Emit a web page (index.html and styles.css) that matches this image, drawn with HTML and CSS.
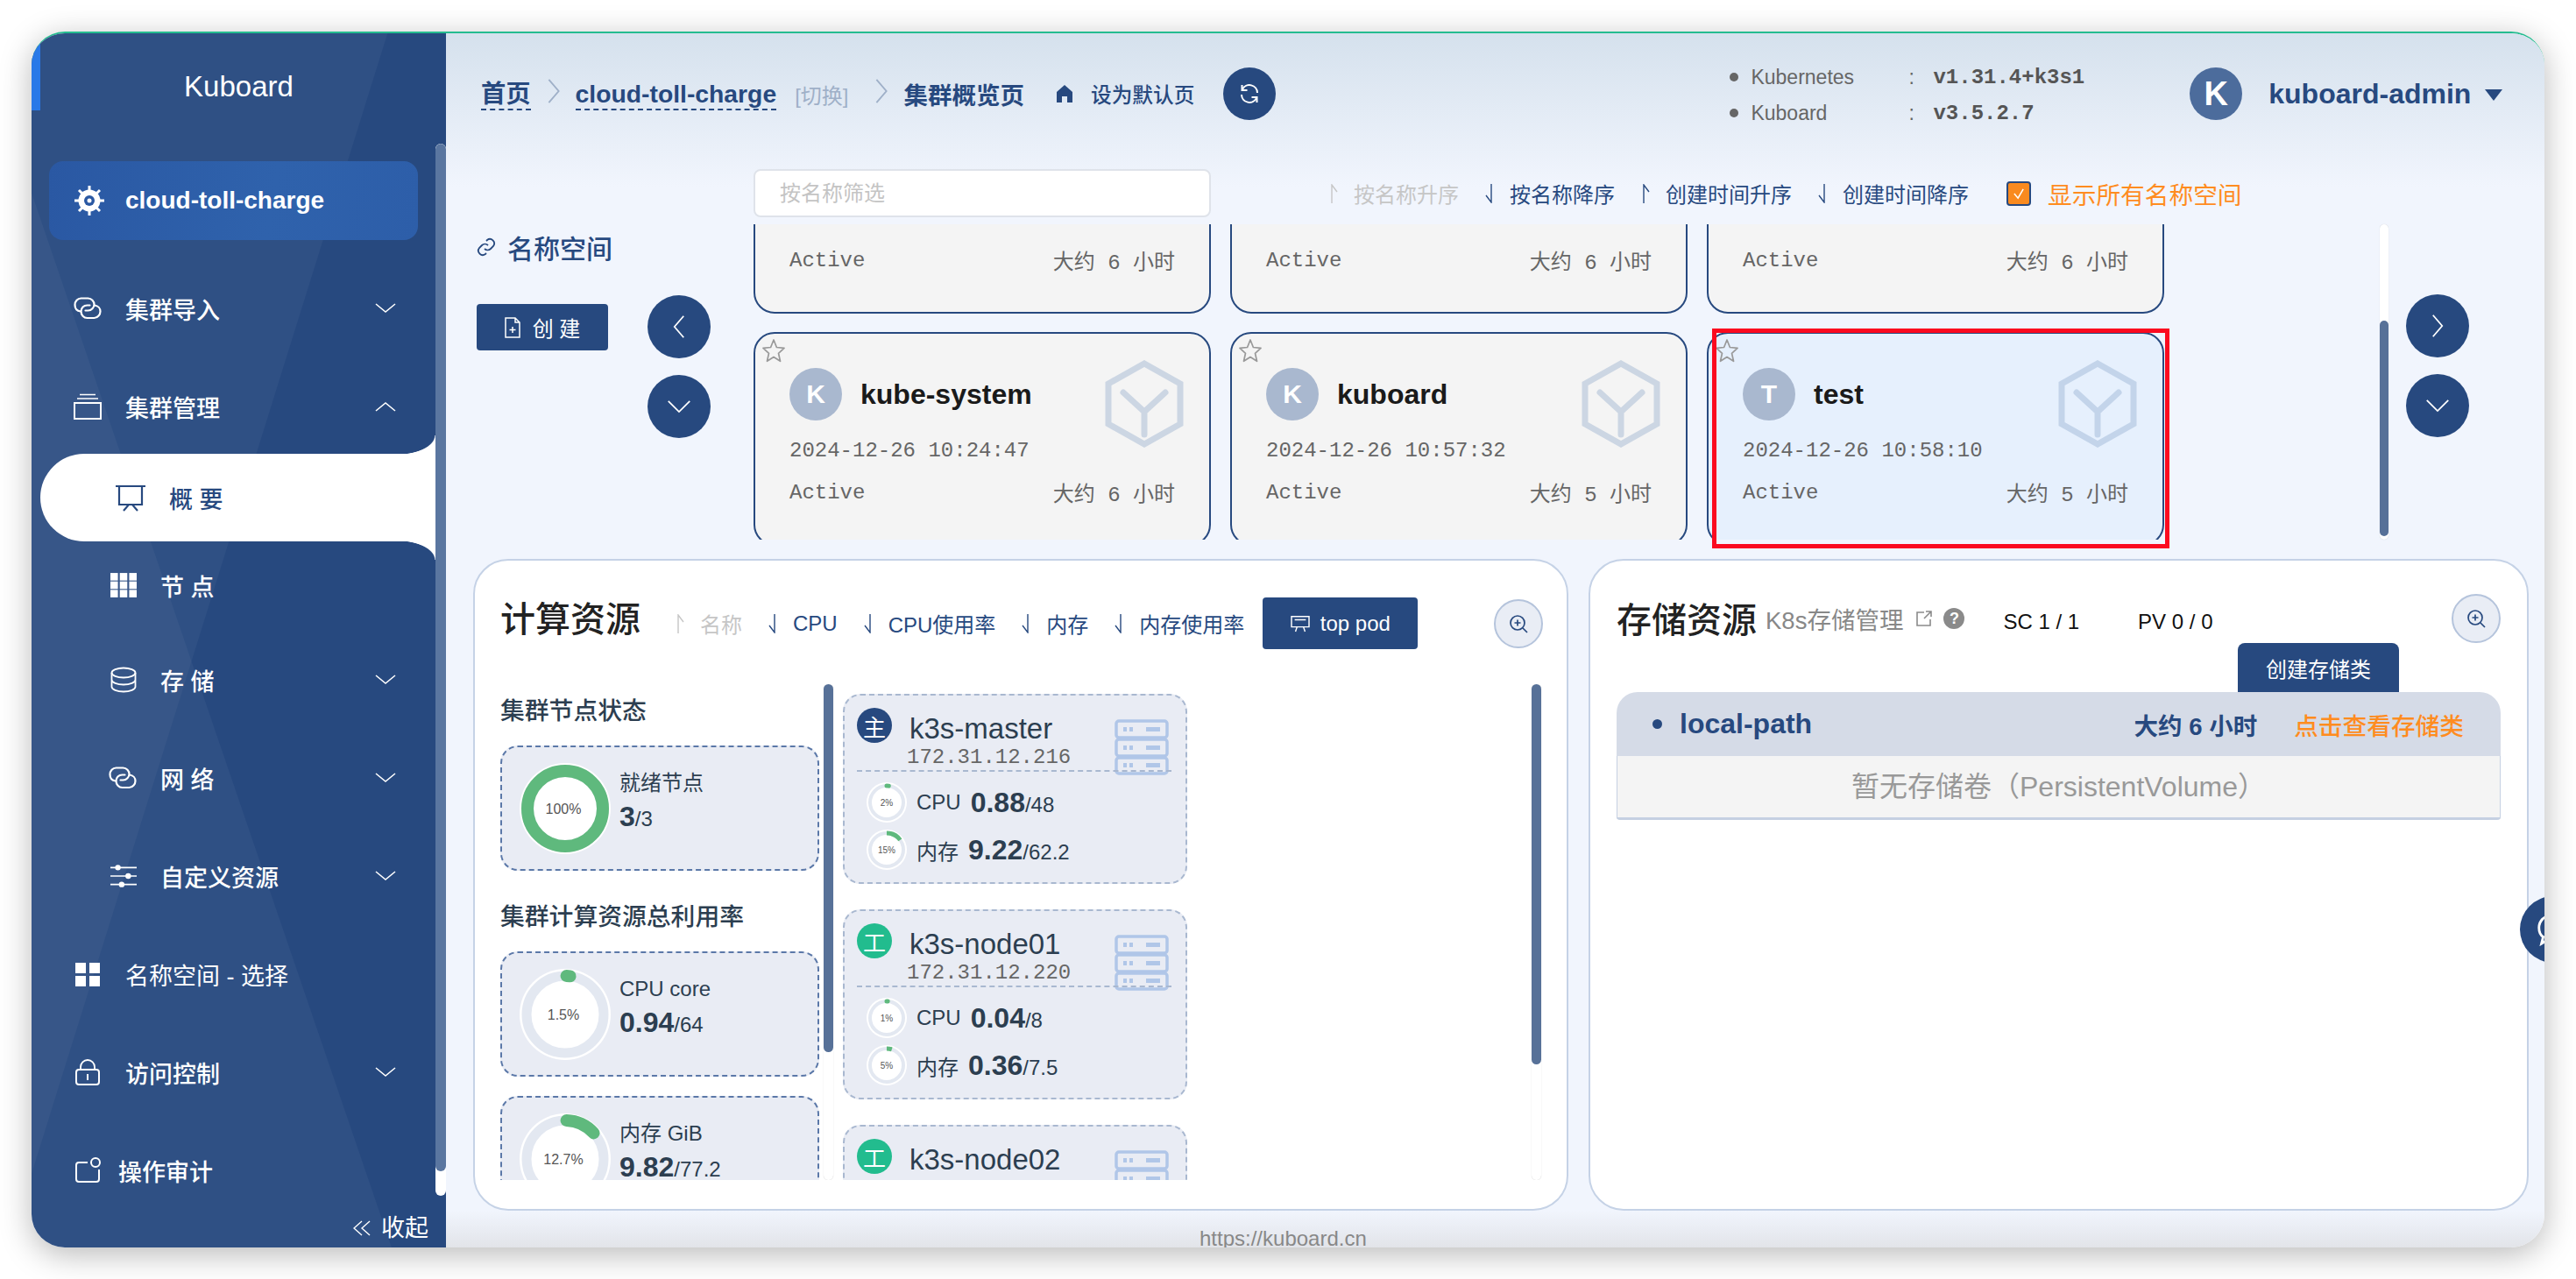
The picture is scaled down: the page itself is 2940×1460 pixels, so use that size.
FILE: index.html
```html
<!DOCTYPE html>
<html lang="zh-CN">
<head>
    <meta charset="UTF-8">
    <title>Kuboard</title>
    <link rel="stylesheet" href="styles.css">
</head>
<body>
<svg class="sprite" xmlns="http://www.w3.org/2000/svg">
    <symbol id="i-chev-down" viewBox="0 0 24 12"><path d="M1 1l11 9L23 1" fill="none" stroke="currentColor" stroke-width="1.6"/></symbol>
    <symbol id="i-chev-up" viewBox="0 0 24 12"><path d="M1 11L12 2l11 9" fill="none" stroke="currentColor" stroke-width="1.6"/></symbol>
    <symbol id="i-link" viewBox="0 0 32 26"><path d="M8 16.500C4 16 1.500 13 1.500 9S4.500 1.500 8.500 1.500h8c4 0 7 3.500 7 7s-3 7-7 7h-3" fill="none" stroke="currentColor" stroke-width="2.200" stroke-linecap="round"/><path d="M24 9.500c4 .5 6.500 3.500 6.500 7s-3 7.500-7 7.500h-8c-4 0-7-3.500-7-7.500s3-7 7-7h3" fill="none" stroke="currentColor" stroke-width="2.200" stroke-linecap="round"/></symbol>
    <symbol id="i-arrow-up" viewBox="0 0 10 22"><path d="M3 22V1l6 8" fill="none" stroke="currentColor" stroke-width="1.4"/></symbol>
    <symbol id="i-arrow-down" viewBox="0 0 10 22"><path d="M7 0v21L1 13" fill="none" stroke="currentColor" stroke-width="1.4"/></symbol>
    <symbol id="i-star" viewBox="0 0 26 28"><path d="M13 2l3.400 8.500 8.600.8-6.500 6 2 9L13 21.500 5.500 26.300l2-9L1 11.300l8.600-.8z" fill="none" stroke="currentColor" stroke-width="1.700" stroke-linejoin="round"/></symbol>
    <symbol id="i-hex" viewBox="0 0 90 100"><path d="M45 4l41 23v46L45 96 4 73V27z" fill="none" stroke="currentColor" stroke-width="7"/><path d="M21 37l24 22 24-22M45 59v26" fill="none" stroke="currentColor" stroke-width="7" stroke-linecap="round"/></symbol>
    <symbol id="i-server" viewBox="0 0 62 64"><g fill="none" stroke="currentColor" stroke-width="3.500"><rect x="2" y="2" width="58" height="19" rx="3"/><rect x="2" y="23" width="58" height="19" rx="3"/><rect x="2" y="44" width="58" height="18" rx="3"/></g><g fill="currentColor"><rect x="10" y="9" width="4" height="5"/><rect x="17" y="9" width="4" height="5"/><rect x="36" y="9" width="16" height="5"/><rect x="10" y="30" width="4" height="5"/><rect x="17" y="30" width="4" height="5"/><rect x="36" y="30" width="16" height="5"/><rect x="10" y="50" width="4" height="5"/><rect x="17" y="50" width="4" height="5"/><rect x="36" y="50" width="16" height="5"/></g></symbol>
    <symbol id="i-zoom" viewBox="0 0 24 24"><circle cx="11" cy="11" r="8" fill="none" stroke="currentColor" stroke-width="1.700"/><path d="M17 17l5 5M11 7.500v7M7.500 11h7" fill="none" stroke="currentColor" stroke-width="1.700"/></symbol>
</svg>

<div class="window">
    <aside class="sidebar">
        <svg class="side-decor" viewBox="0 0 473 1388" xmlns="http://www.w3.org/2000/svg">
            <polygon points="0,0 407,0 0,1304" fill="#fff" fill-opacity="0.04"/>
            <polygon points="0,184 411,1388 0,1388" fill="#fff" fill-opacity="0.04"/>
        </svg>
        <span class="side-notch"></span>
        <nav class="side-nav">
            <div class="side-title">Kuboard</div>
            <div class="cluster-item">
                <svg class="cluster-icon" viewBox="0 0 36 36"><path d="M18 1v34M1 18h34M6 6l24 24M30 6L6 30" stroke="#fff" stroke-width="3"/><circle cx="18" cy="18" r="12.500" fill="#fff"/><circle cx="18" cy="18" r="6" fill="#2a58a3"/><circle cx="18" cy="18" r="2.500" fill="#fff"/></svg>
                <span>cloud-toll-charge</span>
            </div>
            <div class="menu-row first">
                <svg class="menu-icon"><use href="#i-link"/></svg>
                <span>集群导入</span>
                <svg class="chev"><use href="#i-chev-down"/></svg>
            </div>
            <div class="menu-row open">
                <svg class="menu-icon" viewBox="0 0 32 30"><path d="M7 1.500h18M4 6h24" stroke="#fff" stroke-width="1.500"/><rect x="1" y="11" width="30" height="18" fill="none" stroke="#fff" stroke-width="2"/></svg>
                <span>集群管理</span>
                <svg class="chev"><use href="#i-chev-up"/></svg>
            </div>
            <div class="sub-active">
                <svg class="sub-active-icon" viewBox="0 0 34 31"><path d="M0 2h34M4 2v21h26V2M9 30l6-7h4l6 7" fill="none" stroke="#27497f" stroke-width="2.200"/></svg>
                <span>概 要</span>
            </div>
            <div class="menu-row sub short">
                <svg class="menu-icon" viewBox="0 0 28 26"><g fill="#fff"><rect width="8" height="8"/><rect x="10" width="8" height="8"/><rect x="20" width="8" height="8"/><rect y="9" width="8" height="8"/><rect x="10" y="9" width="8" height="8"/><rect x="20" y="9" width="8" height="8"/><rect y="18" width="8" height="8"/><rect x="10" y="18" width="8" height="8"/><rect x="20" y="18" width="8" height="8"/></g></svg>
                <span>节 点</span>
            </div>
            <div class="menu-row sub shifted">
                <svg class="menu-icon" viewBox="0 0 30 30"><g fill="none" stroke="#fff" stroke-width="1.800"><ellipse cx="15" cy="7" rx="13.500" ry="5.500"/><path d="M1.500 7v16c0 3 6 5.500 13.500 5.500s13.500-2.500 13.500-5.500V7M1.500 15c0 3 6 5.500 13.500 5.500s13.500-2.500 13.500-5.500"/></g></svg>
                <span>存 储</span>
                <svg class="chev"><use href="#i-chev-down"/></svg>
            </div>
            <div class="menu-row sub net">
                <svg class="menu-icon"><use href="#i-link"/></svg>
                <span>网 络</span>
                <svg class="chev"><use href="#i-chev-down"/></svg>
            </div>
            <div class="menu-row sub wide-label">
                <svg class="menu-icon" viewBox="0 0 28 26"><path d="M0 4h28M0 13h28M0 22h28" stroke="#fff" stroke-width="1.600"/><circle cx="8" cy="4" r="3" fill="#fff"/><circle cx="19" cy="13" r="3" fill="#fff"/><circle cx="12" cy="22" r="3" fill="#fff"/></svg>
                <span>自定义资源</span>
                <svg class="chev"><use href="#i-chev-down"/></svg>
            </div>
            <div class="menu-row thin">
                <svg class="menu-icon" viewBox="0 0 32 28"><g fill="#fff"><rect x="2" y="1" width="12" height="12"/><rect x="18" y="1" width="12" height="12"/><rect x="2" y="16" width="12" height="12"/><rect x="18" y="16" width="12" height="12"/></g></svg>
                <span>名称空间 - 选择</span>
            </div>
            <div class="menu-row">
                <svg class="menu-icon" viewBox="0 0 32 30"><path d="M8 11V9a8 8 0 0 1 16 0v2" fill="none" stroke="#fff" stroke-width="1.800"/><rect x="3" y="12" width="26" height="17" rx="3" fill="none" stroke="#fff" stroke-width="2"/><path d="M16 17v7" stroke="#fff" stroke-width="2"/></svg>
                <span>访问控制</span>
                <svg class="chev"><use href="#i-chev-down"/></svg>
            </div>
            <div class="menu-row audit">
                <svg class="menu-icon" viewBox="0 0 32 30"><path d="M16 6H6a3 3 0 0 0-3 3v16a3 3 0 0 0 3 3h20a3 3 0 0 0 3-3V14" fill="none" stroke="#fff" stroke-width="2"/><circle cx="25" cy="6" r="5" fill="none" stroke="#fff" stroke-width="2"/></svg>
                <span>操作审计</span>
            </div>
        </nav>
        <div class="side-scroll"><span class="side-scroll-thumb"></span></div>
        <div class="collapse">
            <svg viewBox="0 0 20 18"><path d="M10 1L1 9l9 8M19 1l-9 8 9 8" fill="none" stroke="#fff" stroke-width="1.400"/></svg>
            <span>收起</span>
        </div>
    </aside>

    <main class="main">
        <header class="topbar">
            <a class="crumb-link">首页</a>
            <svg class="crumb-sep" viewBox="0 0 16 32"><path d="M2 2l12 14L2 30" fill="none" stroke="#9fb0c8" stroke-width="2"/></svg>
            <a class="crumb-link">cloud-toll-charge</a>
            <span class="crumb-switch">[切换]</span>
            <svg class="crumb-sep" viewBox="0 0 16 32"><path d="M2 2l12 14L2 30" fill="none" stroke="#9fb0c8" stroke-width="2"/></svg>
            <span class="crumb-current">集群概览页</span>
            <svg class="home-icon" viewBox="0 0 20 22"><path d="M10 1L1 9v12h6v-7h6v7h6V9z" fill="#27497f"/></svg>
            <span class="set-default">设为默认页</span>
            <span class="refresh">
                <svg viewBox="0 0 24 24"><path d="M21 11A9 9 0 0 0 4 7M3 13a9 9 0 0 0 17 4" fill="none" stroke="#fff" stroke-width="2"/><path d="M3.500 2v6h6M20.500 22v-6h-6" fill="none" stroke="#fff" stroke-width="2"/></svg>
            </span>
            <div class="versions">
                <div class="version-row"><i></i><span class="v-name">Kubernetes</span><span class="v-colon">:</span><span class="v-value">v1.31.4+k3s1</span></div>
                <div class="version-row"><i></i><span class="v-name">Kuboard</span><span class="v-colon">:</span><span class="v-value">v3.5.2.7</span></div>
            </div>
            <span class="user-avatar">K</span>
            <span class="user-name">kuboard-admin</span>
            <span class="user-caret"></span>
        </header>

        <section class="ns">
            <div class="ns-left">
                <div class="ns-label">
                    <svg viewBox="0 0 24 24"><path d="M10 14a5 5 0 0 0 7 0l3-3a5 5 0 0 0-7-7l-1 1M14 10a5 5 0 0 0-7 0l-3 3a5 5 0 0 0 7 7l1-1" fill="none" stroke="#27497f" stroke-width="1.800"/></svg>
                    <span>名称空间</span>
                </div>
                <button class="create-btn">
                    <svg viewBox="0 0 18 24"><path d="M1 1h11l5 5v17H1zM12 1v5h5M9 11v7M5.500 14.500h7" fill="none" stroke="#fff" stroke-width="1.500"/></svg>
                    <span>创 建</span>
                </button>
            </div>
            <div class="ns-arrows">
                <span class="round-btn"><svg viewBox="0 0 20 32"><path d="M16 2L4 16l12 14" fill="none" stroke="#fff" stroke-width="2"/></svg></span>
                <span class="round-btn"><svg viewBox="0 0 32 20"><path d="M2 3l14 14L30 3" fill="none" stroke="#fff" stroke-width="2"/></svg></span>
            </div>
            <div class="ns-center">
                <div class="ns-tools">
                    <input class="ns-filter" type="text" placeholder="按名称筛选">
                    <span class="sort off first-sort"><svg><use href="#i-arrow-up"/></svg>按名称升序</span>
                    <span class="sort"><svg><use href="#i-arrow-down"/></svg>按名称降序</span>
                    <span class="sort"><svg><use href="#i-arrow-up"/></svg>创建时间升序</span>
                    <span class="sort"><svg><use href="#i-arrow-down"/></svg>创建时间降序</span>
                    <span class="ns-check"><svg viewBox="0 0 28 28"><path d="M8 14l5 6 7-12" fill="none" stroke="#fff" stroke-width="1.800"/></svg></span>
                    <span class="ns-check-label">显示所有名称空间</span>
                </div>
                <div class="ns-view">
                    <div class="ns-grid">
                        <div class="ns-card">
                            <div class="ns-head"></div>
                            <div class="ns-date">2024-12-26 10:24:47</div>
                            <div class="ns-meta"><span>Active</span><span>大约 6 小时</span></div>
                        </div>
                        <div class="ns-card">
                            <div class="ns-head"></div>
                            <div class="ns-date">2024-12-26 10:24:47</div>
                            <div class="ns-meta"><span>Active</span><span>大约 6 小时</span></div>
                        </div>
                        <div class="ns-card">
                            <div class="ns-head"></div>
                            <div class="ns-date">2024-12-26 10:24:47</div>
                            <div class="ns-meta"><span>Active</span><span>大约 6 小时</span></div>
                        </div>
                        <div class="ns-card">
                            <svg class="star"><use href="#i-star"/></svg>
                            <div class="ns-head"><span class="ns-avatar">K</span><span class="ns-name">kube-system</span></div>
                            <svg class="hex"><use href="#i-hex"/></svg>
                            <div class="ns-date">2024-12-26 10:24:47</div>
                            <div class="ns-meta"><span>Active</span><span>大约 6 小时</span></div>
                        </div>
                        <div class="ns-card">
                            <svg class="star"><use href="#i-star"/></svg>
                            <div class="ns-head"><span class="ns-avatar">K</span><span class="ns-name">kuboard</span></div>
                            <svg class="hex"><use href="#i-hex"/></svg>
                            <div class="ns-date">2024-12-26 10:57:32</div>
                            <div class="ns-meta"><span>Active</span><span>大约 5 小时</span></div>
                        </div>
                        <div class="ns-card selected">
                            <svg class="star"><use href="#i-star"/></svg>
                            <div class="ns-head"><span class="ns-avatar">T</span><span class="ns-name">test</span></div>
                            <svg class="hex"><use href="#i-hex"/></svg>
                            <div class="ns-date">2024-12-26 10:58:10</div>
                            <div class="ns-meta"><span>Active</span><span>大约 5 小时</span></div>
                        </div>
                    </div>
                </div>
                <div class="red-mark"></div>
            </div>
            <div class="ns-scroll"><span></span></div>
            <div class="ns-arrows right">
                <span class="round-btn"><svg viewBox="0 0 20 32"><path d="M4 2l12 14L4 30" fill="none" stroke="#fff" stroke-width="2"/></svg></span>
                <span class="round-btn"><svg viewBox="0 0 32 20"><path d="M2 3l14 14L30 3" fill="none" stroke="#fff" stroke-width="2"/></svg></span>
            </div>
        </section>

        <section class="panels">
            <div class="panel compute">
                <div class="panel-head">
                    <h2 class="panel-title">计算资源</h2>
                    <span class="sort off s-name"><svg><use href="#i-arrow-up"/></svg>名称</span>
                    <span class="sort"><svg><use href="#i-arrow-down"/></svg>CPU</span>
                    <span class="sort"><svg><use href="#i-arrow-down"/></svg>CPU使用率</span>
                    <span class="sort"><svg><use href="#i-arrow-down"/></svg>内存</span>
                    <span class="sort"><svg><use href="#i-arrow-down"/></svg>内存使用率</span>
                    <button class="top-pod">
                        <svg viewBox="0 0 24 22"><path d="M1 2h22v13H1zM5 6h14M8 15l-2 6M16 15l2 6" fill="none" stroke="#fff" stroke-width="1.600"/></svg>
                        <span>top pod</span>
                    </button>
                    <span class="zoom-btn"><svg><use href="#i-zoom"/></svg></span>
                </div>
                <div class="compute-body">
                    <div class="stats-col">
                        <div class="stats-title">集群节点状态</div>
                        <div class="stat-card">
                            <svg class="ring" viewBox="0 0 104 104">
                                <circle class="ring-bg" cx="52" cy="52" r="52"/>
                                <circle class="ring-track" cx="52" cy="52" r="43" stroke-width="14"/>
                                <circle class="ring-value" cx="52" cy="52" r="43" stroke-width="14" pathLength="100" stroke-dasharray="100 100" transform="rotate(-90 52 52)"/>
                                <text x="50" y="58" text-anchor="middle" class="ring-text">100%</text>
                            </svg>
                            <div class="stat-text">
                                <div class="stat-label">就绪节点</div>
                                <div class="stat-value"><b>3</b>/3</div>
                            </div>
                        </div>
                        <div class="stats-title second">集群计算资源总利用率</div>
                        <div class="stat-card">
                            <svg class="ring" viewBox="0 0 104 104">
                                <circle class="ring-bg" cx="52" cy="52" r="52"/>
                                <circle class="ring-track" cx="52" cy="52" r="44" stroke-width="11"/>
                                <circle class="ring-value" cx="52" cy="52" r="44" stroke-width="14" stroke-linecap="round" pathLength="100" stroke-dasharray="1.500 100" transform="rotate(-88 52 52)"/>
                                <text x="50" y="58" text-anchor="middle" class="ring-text">1.5%</text>
                            </svg>
                            <div class="stat-text">
                                <div class="stat-label">CPU core</div>
                                <div class="stat-value"><b>0.94</b>/64</div>
                            </div>
                        </div>
                        <div class="stat-card third">
                            <svg class="ring" viewBox="0 0 104 104">
                                <circle class="ring-bg" cx="52" cy="52" r="52"/>
                                <circle class="ring-track" cx="52" cy="52" r="44" stroke-width="11"/>
                                <circle class="ring-value" cx="52" cy="52" r="44" stroke-width="14" stroke-linecap="round" pathLength="100" stroke-dasharray="12.700 100" transform="rotate(-88 52 52)"/>
                                <text x="50" y="58" text-anchor="middle" class="ring-text">12.7%</text>
                            </svg>
                            <div class="stat-text">
                                <div class="stat-label">内存 GiB</div>
                                <div class="stat-value"><b>9.82</b>/77.2</div>
                            </div>
                        </div>
                    </div>
                    <div class="v-scroll left"><span></span></div>
                    <div class="nodes-col">
                        <div class="node-card">
                            <svg class="node-server"><use href="#i-server"/></svg>
                            <div class="node-head">
                                <span class="node-badge master">主</span>
                                <div class="node-titles"><div class="node-name">k3s-master</div><div class="node-ip">172.31.12.216</div></div>
                            </div>
                            <div class="node-stat">
                                <svg class="mini-ring" viewBox="0 0 46 46"><circle class="ring-bg" cx="23" cy="23" r="23"/><circle class="ring-track" cx="23" cy="23" r="19" stroke-width="4"/><circle class="ring-value" cx="23" cy="23" r="19" stroke-width="5" stroke-linecap="round" pathLength="100" stroke-dasharray="2 100" transform="rotate(-90 23 23)"/><text x="23" y="27" text-anchor="middle" class="mini-text">2%</text></svg>
                                <span class="ns-stat-name">CPU</span><span class="node-val"><b>0.88</b>/48</span>
                            </div>
                            <div class="node-stat">
                                <svg class="mini-ring" viewBox="0 0 46 46"><circle class="ring-bg" cx="23" cy="23" r="23"/><circle class="ring-track" cx="23" cy="23" r="19" stroke-width="4"/><circle class="ring-value" cx="23" cy="23" r="19" stroke-width="5" pathLength="100" stroke-dasharray="15 100" transform="rotate(-90 23 23)"/><text x="23" y="27" text-anchor="middle" class="mini-text">15%</text></svg>
                                <span class="ns-stat-name">内存</span><span class="node-val"><b>9.22</b>/62.2</span>
                            </div>
                        </div>
                        <div class="node-card">
                            <svg class="node-server"><use href="#i-server"/></svg>
                            <div class="node-head">
                                <span class="node-badge worker">工</span>
                                <div class="node-titles"><div class="node-name">k3s-node01</div><div class="node-ip">172.31.12.220</div></div>
                            </div>
                            <div class="node-stat">
                                <svg class="mini-ring" viewBox="0 0 46 46"><circle class="ring-bg" cx="23" cy="23" r="23"/><circle class="ring-track" cx="23" cy="23" r="19" stroke-width="4"/><circle class="ring-value" cx="23" cy="23" r="19" stroke-width="5" stroke-linecap="round" pathLength="100" stroke-dasharray="1 100" transform="rotate(-90 23 23)"/><text x="23" y="27" text-anchor="middle" class="mini-text">1%</text></svg>
                                <span class="ns-stat-name">CPU</span><span class="node-val"><b>0.04</b>/8</span>
                            </div>
                            <div class="node-stat">
                                <svg class="mini-ring" viewBox="0 0 46 46"><circle class="ring-bg" cx="23" cy="23" r="23"/><circle class="ring-track" cx="23" cy="23" r="19" stroke-width="4"/><circle class="ring-value" cx="23" cy="23" r="19" stroke-width="5" pathLength="100" stroke-dasharray="5 100" transform="rotate(-90 23 23)"/><text x="23" y="27" text-anchor="middle" class="mini-text">5%</text></svg>
                                <span class="ns-stat-name">内存</span><span class="node-val"><b>0.36</b>/7.5</span>
                            </div>
                        </div>
                        <div class="node-card">
                            <svg class="node-server"><use href="#i-server"/></svg>
                            <div class="node-head">
                                <span class="node-badge worker">工</span>
                                <div class="node-titles"><div class="node-name">k3s-node02</div></div>
                            </div>
                        </div>
                    </div>
                    <div class="v-scroll right"><span></span></div>
                </div>
            </div>

            <div class="panel storage">
                <div class="storage-head">
                    <h2 class="panel-title">存储资源</h2>
                    <span class="k8s-link">K8s存储管理</span>
                    <svg class="ext-icon" viewBox="0 0 20 20"><path d="M10 3H2v15h15v-7M12 2h6v6M18 2l-8 8" fill="none" stroke="#8a8a8a" stroke-width="1.600"/></svg>
                    <span class="help">?</span>
                    <span class="sc-count">SC 1 / 1</span>
                    <span class="pv-count">PV 0 / 0</span>
                    <span class="zoom-btn"><svg><use href="#i-zoom"/></svg></span>
                </div>
                <div class="storage-action"><button class="create-sc">创建存储类</button></div>
                <div class="sc-card">
                    <div class="sc-head">
                        <i></i>
                        <span class="sc-name">local-path</span>
                        <span class="sc-age">大约 6 小时</span>
                        <span class="sc-link">点击查看存储类</span>
                    </div>
                    <div class="sc-body">暂无存储卷（PersistentVolume）</div>
                </div>
            </div>
        </section>

        <footer class="page-foot">https://kuboard.cn</footer>
        <div class="chat-bubble"><svg viewBox="0 0 40 40"><path d="M21 3C11 3 5 10 5 18c0 5 2 9 5 11l-2 8 8-5c1 .3 3 .5 5 .5 10 0 16-7 16-14.500S31 3 21 3z" fill="none" stroke="#fff" stroke-width="3"/></svg></div>
    </main>
</div>
</body>
</html>
```

FILE: styles.css
```css
* {
    box-sizing: border-box;
}
html, body {
    margin: 0;
    height: 1460px;
    overflow: hidden;
    background-color: #fff;
}
body {
    padding: 36px 36px 0;
    font-family: "Liberation Sans", "Noto Sans CJK SC", sans-serif;
    color: #2c3e50;
}
.sprite {
    display: none;
}
button {
    font-family: inherit;
    border: none;
}

/* window */
.window {
    display: flex;
    width: 2868px;
    height: 1388px;
    border-top: 2px solid #25bc90;
    border-radius: 38px;
    overflow: hidden;
    box-shadow: 0 8px 36px rgba(0, 0, 0, 0.28);
}

/* sidebar */
.sidebar {
    position: relative;
    flex: none;
    display: flex;
    width: 473px;
    background-color: #27497f;
    color: #fff;
}
.side-decor {
    position: absolute;
    left: 0;
    top: -2px;
    width: 473px;
    height: 1388px;
}
.side-notch {
    position: absolute;
    left: 0;
    top: 0;
    width: 10px;
    height: 88px;
    background-color: #2979e8;
}
.side-nav {
    position: relative;
    width: 461px;
    flex: none;
}
.side-title {
    height: 146px;
    padding: 38px 0 0 12px;
    text-align: center;
    font-size: 33px;
    line-height: 46px;
}
.cluster-item {
    display: flex;
    align-items: center;
    height: 90px;
    width: 421px;
    margin-left: 20px;
    padding-left: 28px;
    border-radius: 16px;
    background: linear-gradient(100deg, #2a58a3, #2f62ac 60%, #2d5ea9);
    font-size: 28px;
    font-weight: 700;
}
.cluster-icon {
    width: 36px;
    height: 36px;
    margin-right: 23px;
}
.menu-row {
    display: flex;
    align-items: center;
    height: 112px;
    padding: 0 45px 0 48px;
    font-size: 27px;
    font-weight: 500;
}
.menu-row.first {
    margin-top: 22px;
}
.menu-row.open {
    height: 110px;
    padding-top: 2px;
}
.menu-row.thin {
    font-weight: 400;
}
.menu-icon {
    flex: none;
    width: 32px;
    height: 30px;
    margin-right: 27px;
    color: #fff;
}
.menu-row.audit .menu-icon {
    margin-right: 19px;
}
.menu-row.sub {
    padding-left: 90px;
}
.menu-row.sub .menu-icon {
    width: 30px;
    height: 30px;
    margin-right: 27px;
}
.menu-row.net .menu-icon {
    width: 32px;
    margin-left: -2px;
}
.menu-row.short {
    height: 100px;
}
.menu-row.shifted {
    margin-top: 2px;
}
.chev {
    flex: none;
    width: 24px;
    height: 12px;
    margin-left: auto;
    color: #fff;
}
.sub-active {
    position: relative;
    display: flex;
    align-items: center;
    height: 100px;
    margin-left: 10px;
    padding-left: 86px;
    border-radius: 50px 0 0 50px;
    background-color: #fff;
    color: #27497f;
    font-size: 27px;
    font-weight: 500;
}
.sub-active::before,
.sub-active::after {
    content: "";
    position: absolute;
    right: 0;
    width: 44px;
    height: 22px;
}
.sub-active::before {
    top: -21px;
    background: radial-gradient(ellipse 44px 22px at 0 0, transparent 97%, #fff 100%);
}
.sub-active::after {
    bottom: -21px;
    background: radial-gradient(ellipse 44px 22px at 0 100%, transparent 97%, #fff 100%);
}
.sub-active-icon {
    width: 34px;
    height: 31px;
    margin-right: 27px;
}
.side-scroll {
    position: relative;
    display: flex;
    flex-direction: column;
    width: 12px;
    height: 1201px;
    margin-top: 126px;
    border-radius: 6px;
    overflow: hidden;
    background-color: #fff;
}
.side-scroll-thumb {
    height: 1173px;
    background-color: #5a76a0;
    border-radius: 6px;
}
.collapse {
    position: absolute;
    right: 20px;
    bottom: 4px;
    display: flex;
    align-items: center;
    font-size: 27px;
    line-height: 36px;
}
.collapse svg {
    width: 20px;
    height: 18px;
    margin-right: 12px;
}

/* main area */
.main {
    position: relative;
    flex: 1;
    min-width: 0;
    background: linear-gradient(#d5e1ed 0, #f1f5fd 175px, #f1f5fd 1344px, #e2e4e9 100%);
}
.topbar {
    display: flex;
    align-items: center;
    height: 138px;
    padding-left: 40px;
    color: #27497f;
}
.crumb-link {
    font-size: 28.300px;
    font-weight: 700;
    line-height: 34px;
    border-bottom: 2px dashed #27497f;
    margin-top: 2px;
}
.crumb-sep {
    width: 16px;
    height: 30px;
    margin: -6px 17px 0 18px;
}
.crumb-switch {
    margin: 0 12px 0 21px;
    font-size: 24px;
    color: #9fb0c8;
}
.crumb-current {
    font-size: 27.500px;
    font-weight: 700;
    margin-left: 0;
}
.home-icon {
    width: 20px;
    height: 22px;
    margin-left: 36px;
}
.set-default {
    margin-left: 20px;
    font-size: 23.700px;
    font-weight: 500;
}
.refresh {
    display: flex;
    align-items: center;
    justify-content: center;
    width: 60px;
    height: 60px;
    margin-left: 33px;
    border-radius: 50%;
    background-color: #27497f;
}
.refresh svg {
    width: 24px;
    height: 24px;
}
.versions {
    margin-left: 518px;
    padding-top: 3px;
    color: #666;
    font-size: 23px;
}
.version-row {
    display: flex;
    align-items: center;
    height: 41px;
}
.version-row i {
    width: 10px;
    height: 10px;
    margin-right: 14px;
    border-radius: 50%;
    background-color: #666;
}
.v-name {
    width: 180px;
}
.v-colon {
    width: 28px;
}
.v-value {
    font-family: "Liberation Mono", monospace;
    font-size: 24px;
    font-weight: 700;
    color: #555;
}
.user-avatar {
    display: flex;
    align-items: center;
    justify-content: center;
    width: 60px;
    height: 60px;
    margin-left: 120px;
    border-radius: 50%;
    background-color: #4c6c9c;
    color: #fff;
    font-size: 38px;
    font-weight: 700;
}
.user-name {
    margin-left: 30px;
    font-size: 32px;
    font-weight: 700;
}
.user-caret {
    width: 0;
    height: 0;
    margin: 2px 0 0 16px;
    border-left: 10px solid transparent;
    border-right: 10px solid transparent;
    border-top: 13px solid #27497f;
}

/* namespaces */
.ns {
    display: flex;
    height: 462px;
    padding-left: 31px;
}
.ns-left {
    flex: none;
    width: 199px;
    padding-top: 86px;
}
.ns-label {
    display: flex;
    align-items: center;
    height: 40px;
    padding-left: 3px;
    color: #27497f;
    font-size: 30px;
    font-weight: 500;
}
.ns-label svg {
    width: 24px;
    height: 24px;
    margin-right: 12px;
}
.create-btn {
    display: flex;
    align-items: center;
    justify-content: center;
    width: 150px;
    height: 53px;
    margin: 45px 0 0 4px;
    border-radius: 4px;
    background-color: #27497f;
    color: #fff;
    font-size: 24px;
}
.create-btn svg {
    width: 18px;
    height: 24px;
    margin-right: 14px;
}
.ns-arrows {
    flex: none;
    width: 73px;
    padding-top: 161px;
}
.ns-arrows.right {
    margin-left: 20px;
    padding-top: 160px;
}
.round-btn {
    display: flex;
    align-items: center;
    justify-content: center;
    width: 72px;
    height: 72px;
    margin-bottom: 19px;
    border-radius: 50%;
    background-color: #27497f;
}
.round-btn svg {
    width: 28px;
    height: 28px;
}
.ns-center {
    position: relative;
    flex: none;
    width: 1610px;
    margin-left: 48px;
    padding-top: 17px;
}
.ns-tools {
    display: flex;
    align-items: center;
    height: 55px;
    white-space: nowrap;
}
.ns-filter {
    flex: none;
    width: 522px;
    height: 55px;
    padding: 0 28px;
    border: 2px solid #dfe3ea;
    border-radius: 8px;
    background-color: #fff;
    font-family: inherit;
    font-size: 24px;
    outline: none;
}
.ns-filter::placeholder {
    color: #c4c4c4;
}
.sort {
    display: inline-flex;
    align-items: center;
    margin-left: 30px;
    color: #27497f;
    font-size: 24px;
    white-space: nowrap;
}
.sort svg {
    width: 10px;
    height: 22px;
    margin-right: 18px;
}
.sort.off {
    color: #c6c6c6;
}
.first-sort {
    margin-left: 135px;
}
.ns-check {
    display: flex;
    flex: none;
    width: 28px;
    height: 28px;
    margin-left: 43px;
    border: 2px solid #27497f;
    border-radius: 4px;
    background-color: #f98a1f;
}
.ns-check svg {
    width: 24px;
    height: 24px;
}
.ns-check-label {
    margin-left: 19px;
    color: #ff8c1f;
    font-size: 27.700px;
}
.ns-view {
    height: 360px;
    margin-top: 8px;
    overflow: hidden;
}
.ns-grid {
    display: grid;
    grid-template-columns: repeat(3, 522px);
    gap: 21px 22px;
    margin-top: -142px;
}
.ns-card {
    position: relative;
    height: 244px;
    padding: 39px 39px 0;
    border: 2px solid #27497f;
    border-radius: 24px;
    background-color: #f4f4f4;
}
.ns-card.selected {
    background-color: #e6f0fd;
}
.star {
    position: absolute;
    left: 8px;
    top: 5px;
    width: 26px;
    height: 28px;
    color: #999;
}
.hex {
    position: absolute;
    right: 29px;
    top: 30px;
    width: 90px;
    height: 100px;
    color: #ccd6e3;
}
.selected .hex {
    color: #c3d4ea;
}
.ns-head {
    display: flex;
    align-items: center;
    height: 60px;
}
.ns-avatar {
    display: flex;
    align-items: center;
    justify-content: center;
    width: 60px;
    height: 60px;
    border-radius: 50%;
    background-color: #a9b8cf;
    color: #fff;
    font-size: 30px;
    font-weight: 700;
}
.ns-name {
    margin-left: 21px;
    color: #1a1a1a;
    font-size: 32px;
    font-weight: 700;
}
.ns-date {
    margin-top: 20px;
    font-family: "Liberation Mono", "Noto Sans CJK SC", monospace;
    font-size: 24px;
    line-height: 30px;
    color: #666;
}
.ns-meta {
    display: flex;
    justify-content: space-between;
    margin-top: 18px;
    font-family: "Liberation Mono", "Noto Sans CJK SC", monospace;
    font-size: 24px;
    line-height: 30px;
    color: #666;
}
.ns-meta span:last-child {
    padding-top: 3px;
}
.red-mark {
    position: absolute;
    left: 1094px;
    top: 199px;
    width: 522px;
    height: 251px;
    border: 5px solid #fb0a1f;
}
.ns-scroll {
    flex: none;
    display: flex;
    flex-direction: column;
    justify-content: flex-end;
    width: 10px;
    height: 360px;
    margin: 80px 0 0 246px;
    padding-bottom: 4px;
    border-radius: 5px;
    background-color: #fff;
    box-shadow: 0 0 1px rgba(0, 0, 0, 0.2);
}
.ns-scroll span {
    display: block;
    height: 246px;
    border-radius: 5px;
    background-color: #577198;
}

/* panels */
.panels {
    display: flex;
    gap: 23px;
    height: 744px;
    padding-left: 31px;
}
.panel {
    flex: none;
    height: 744px;
    border: 2px solid #c5d2e6;
    border-radius: 40px;
    background-color: #fff;
}
.panel.compute {
    width: 1250px;
    padding: 42px 0 0 29px;
}
.panel.storage {
    width: 1073px;
    padding: 38px 30px 0;
}
.panel-head,
.storage-head {
    display: flex;
    align-items: center;
    height: 59px;
}
.storage-head {
    height: 56px;
}
.panel-title {
    margin: 0;
    color: #222;
    font-size: 40px;
    font-weight: 500;
    white-space: nowrap;
}
.compute .panel-title {
    margin-top: -16px;
}
.storage .panel-title {
    margin-top: -2px;
}
.s-name {
    margin-left: 40px;
}
.top-pod {
    display: flex;
    align-items: center;
    justify-content: center;
    flex: none;
    width: 177px;
    height: 59px;
    margin-left: 21px;
    border-radius: 4px;
    background-color: #27497f;
    color: #fff;
    font-size: 24px;
}
.top-pod svg {
    width: 22px;
    height: 20px;
    margin-right: 12px;
}
.zoom-btn {
    display: flex;
    align-items: center;
    justify-content: center;
    flex: none;
    width: 56px;
    height: 56px;
    margin-left: auto;
    border: 2px solid #b5c4dc;
    border-radius: 50%;
    background-color: #e9edf5;
}
.compute .zoom-btn {
    margin: 0 0 0 87px;
}
.zoom-btn svg {
    width: 24px;
    height: 24px;
    color: #27497f;
}
.compute-body {
    display: flex;
    height: 566px;
    margin-top: 40px;
    overflow: hidden;
}
.stats-col {
    flex: none;
    width: 364px;
    padding-top: 11px;
}
.stats-title {
    font-size: 27.800px;
    line-height: 40px;
    font-weight: 500;
}
.stats-title.second {
    margin-top: 33px;
}
.stat-card {
    display: flex;
    align-items: center;
    height: 143px;
    margin-top: 19px;
    padding-left: 20px;
    border: 2px dashed #5b78a8;
    border-radius: 20px;
    background-color: #e9ecf4;
}
.stat-card.third {
    margin-top: 22px;
}
.ring {
    flex: none;
    width: 104px;
    height: 104px;
}
.ring-bg {
    fill: #fff;
}
.ring-track {
    fill: none;
    stroke: #e3e8f1;
}
.ring-value {
    fill: none;
    stroke: #5fb97d;
}
.ring-text {
    font-size: 16px;
    fill: #555;
}
.stat-text {
    margin-left: 10px;
    padding-bottom: 15px;
    font-size: 24px;
}
.stat-label {
    line-height: 36px;
}
.stat-value {
    line-height: 40px;
    font-size: 24px;
}
.stat-value b,
.node-val b {
    font-size: 32px;
}
.v-scroll {
    flex: none;
    width: 11px;
    height: 566px;
    border-radius: 6px;
    background-color: #fff;
    box-shadow: 0 0 1px rgba(0, 0, 0, 0.25);
}
.v-scroll span {
    display: block;
    border-radius: 6px;
    background-color: #577198;
}
.v-scroll.left {
    margin-left: 5px;
}
.v-scroll.left span {
    height: 420px;
}
.v-scroll.right {
    margin-left: 393px;
}
.v-scroll.right span {
    height: 434px;
}
.nodes-col {
    flex: none;
    width: 393px;
    margin-left: 11px;
    padding-top: 11px;
}
.node-card {
    position: relative;
    height: 217px;
    margin-bottom: 29px;
    padding: 14px 14px 0;
    border: 2px dashed #a9b8d0;
    border-radius: 20px;
    background-color: #e9ecf4;
}
.node-server {
    position: absolute;
    right: 19px;
    top: 27px;
    width: 62px;
    height: 64px;
    color: #b0c6e8;
}
.node-head {
    position: relative;
    display: flex;
    height: 73px;
    border-bottom: 2px dashed #a9b8d0;
    margin-right: 2px;
}
.node-badge {
    display: flex;
    align-items: center;
    justify-content: center;
    flex: none;
    width: 40px;
    height: 40px;
    border-radius: 50%;
    color: #fff;
    font-size: 26px;
}
.node-badge.master {
    background-color: #27497f;
}
.node-badge.worker {
    background-color: #22bc8e;
}
.node-titles {
    margin-left: 20px;
    padding-top: 6px;
}
.node-name {
    font-size: 33px;
    line-height: 36px;
    font-weight: 500;
}
.node-ip {
    margin-left: -3px;
    font-family: "Liberation Mono", monospace;
    font-size: 24px;
    line-height: 30px;
    color: #666;
}
.node-stat {
    display: flex;
    align-items: center;
    height: 46px;
    margin-top: 8px;
    padding-left: 11px;
    font-size: 24px;
}
.node-head + .node-stat {
    margin-top: 12px;
}
.mini-ring {
    flex: none;
    width: 46px;
    height: 46px;
    margin-right: 11px;
}
.mini-text {
    font-size: 10px;
    fill: #555;
}
.node-val {
    margin-left: 11px;
}

/* storage */
.k8s-link {
    margin-left: 10px;
    color: #888;
    font-size: 27.500px;
    white-space: nowrap;
}
.ext-icon {
    width: 20px;
    height: 20px;
    margin-left: 14px;
}
.help {
    display: flex;
    align-items: center;
    justify-content: center;
    flex: none;
    width: 24px;
    height: 24px;
    margin-left: 12px;
    border-radius: 50%;
    background-color: #8a8a8a;
    color: #fff;
    font-size: 18px;
    font-weight: 700;
}
.sc-count,
.pv-count {
    margin-top: 8px;
    color: #111;
    font-size: 24px;
    white-space: nowrap;
}
.sc-count {
    margin-left: 44px;
}
.pv-count {
    margin-left: 67px;
}
.storage-action {
    display: flex;
    justify-content: flex-end;
    padding-right: 116px;
}
.create-sc {
    width: 184px;
    height: 56px;
    border-radius: 8px 8px 0 0;
    background-color: #27497f;
    color: #fff;
    font-size: 24px;
}
.sc-card {
    border-radius: 24px 24px 4px 4px;
    overflow: hidden;
}
.sc-head {
    display: flex;
    align-items: center;
    height: 73px;
    padding: 0 42px 0 41px;
    background-color: #d5dbe7;
    color: #27497f;
}
.sc-head i {
    width: 11px;
    height: 11px;
    margin-right: 20px;
    border-radius: 50%;
    background-color: #27497f;
}
.sc-name {
    font-size: 32px;
    font-weight: 700;
}
.sc-age {
    margin-left: auto;
    font-size: 27.500px;
    font-weight: 700;
}
.sc-link {
    margin-left: 42px;
    color: #ff8c1f;
    font-size: 27.700px;
    font-weight: 500;
}
.sc-body {
    height: 73px;
    line-height: 70px;
    text-align: center;
    background-color: #f4f4f4;
    border: 1px solid #c5d0e2;
    border-top: none;
    border-bottom: 3px solid #c5d0e2;
    color: #999;
    font-size: 32px;
}

/* bottom */
.page-foot {
    height: 42px;
    padding-left: 860px;
    overflow: hidden;
    color: #888;
    font-size: 24px;
    line-height: 64px;
}
.chat-bubble {
    position: absolute;
    right: -48px;
    top: 985px;
    display: flex;
    align-items: center;
    padding-left: 17px;
    width: 76px;
    height: 76px;
    border-radius: 50%;
    background-color: #27497f;
}
.chat-bubble svg {
    width: 38px;
    height: 38px;
}
```
